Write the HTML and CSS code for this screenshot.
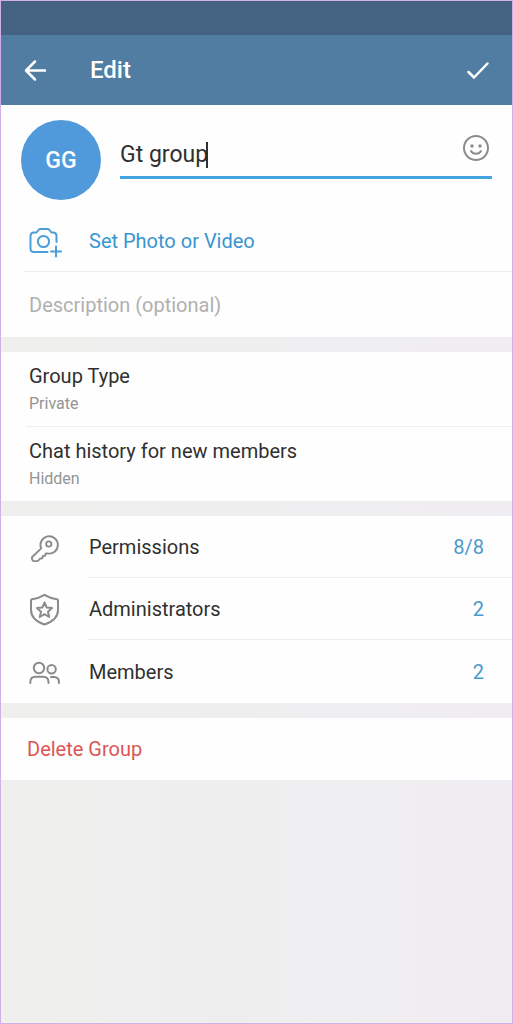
FILE: index.html
```html
<!DOCTYPE html>
<html lang="en">
<head>
<meta charset="utf-8">
<meta name="viewport" content="width=device-width, initial-scale=1">
<title>Edit group</title>
<link rel="stylesheet" href="styles.css">
</head>
<body>
<div class="screen">
  <div class="status-bar"></div>
  <header class="app-bar">
    <button class="icon-button" type="button" aria-label="Back">
      <svg class="bar-icon" width="24" height="24" viewBox="0 0 24 24"><path d="M22 12.500H3.500M12 3.500L3 12.500l9 9"/></svg>
    </button>
    <h1 class="title">Edit</h1>
    <button class="icon-button" type="button" aria-label="Done">
      <svg class="bar-icon" width="24" height="24" viewBox="0 0 24 24"><path d="M2.500 14l5.500 5.500L21.500 5.500"/></svg>
    </button>
  </header>

  <main>
    <section class="card">
      <div class="identity">
        <div class="avatar">GG</div>
        <div class="name-field">
          <input class="name-input" type="text" value="Gt group" size="8" aria-label="Group name"><span class="caret"></span>
          <button class="icon-button emoji-button" type="button" aria-label="Emoji">
            <svg class="line-icon" width="28" height="28" viewBox="0 0 28 28"><circle cx="14" cy="14" r="12"/><path d="M9 17c2.200 3.600 7.800 3.600 10 0"/><circle class="dot" cx="10" cy="12" r="1.700"/><circle class="dot" cx="18" cy="12" r="1.700"/></svg>
          </button>
        </div>
      </div>
      <button class="row photo-row" type="button">
        <svg class="line-icon accent" width="34" height="34" viewBox="0 0 34 34"><path d="M28.500 18V12Q28.500 8.500 25 8.500H23.500L21.500 6Q20.800 5 19.500 5H12.500Q11.200 5 10.500 6L8.500 8.500H6Q2.500 8.500 2.500 12V24.500Q2.500 28 6 28H19.500"/><circle cx="15.500" cy="17.500" r="5.600"/><path d="M28 22.500v10M23 27.500h10"/></svg>
        <span class="label accent">Set Photo or Video</span>
      </button>
      <div class="description">
        <input class="description-input" type="text" placeholder="Description (optional)" aria-label="Description">
      </div>
    </section>

    <section class="card">
      <button class="setting" type="button"><span class="label">Group Type</span><span class="value">Private</span></button>
      <button class="setting" type="button"><span class="label">Chat history for new members</span><span class="value">Hidden</span></button>
    </section>

    <section class="card">
      <button class="row" type="button">
        <svg class="line-icon" width="34" height="34" viewBox="-1 -2 36 36"><path d="M13 17.500A9.200 9.200 0 1 1 19.500 22.800L17.500 23L17.200 25.300L14.500 25.600L14.200 28L11.800 28.200L10 30.300Q7 31.500 4 30.300Q2.800 28.500 3.200 26.800Z"/><circle cx="21" cy="12.800" r="2.800"/></svg>
        <span class="label">Permissions</span><span class="count">8/8</span>
      </button>
      <button class="row" type="button">
        <svg class="line-icon" width="34" height="34" viewBox="0 -1 34 34"><path d="M16.500 1.800Q22.500 5.500 29 6.200Q30 6.400 30 7.500V17Q30 27 16.500 31.500Q3 27 3 17V7.500Q3 6.400 4 6.200Q10.500 5.500 16.500 1.800Z"/><path d="M16.500 9.500L18.700 14.600L24 15.100L20 18.700L21.200 24L16.500 21.200L11.800 24L13 18.700L9 15.100L14.300 14.600Z"/></svg>
        <span class="label">Administrators</span><span class="count">2</span>
      </button>
      <button class="row" type="button">
        <svg class="line-icon" width="34" height="34" viewBox="0 -1 34 34"><circle cx="11" cy="12" r="5.200"/><circle cx="23.600" cy="13.300" r="4.200"/><path d="M2.300 27v-.8Q2.300 20.800 7.700 20.800H15Q20.500 20.800 20.500 26.200v.8M23 21H26Q31 21 31 26.500v.5"/></svg>
        <span class="label">Members</span><span class="count">2</span>
      </button>
    </section>

    <section class="card">
      <button class="delete" type="button">Delete Group</button>
    </section>
  </main>
</div>
</body>
</html>
```
FILE: styles.css
```css
* {
  box-sizing: border-box;
}

body {
  margin: 0;
  font-family: Roboto, "Liberation Sans", sans-serif;
  color: #303030;
}

button,
input {
  margin: 0;
  padding: 0;
  border: 0;
  background: none;
  color: inherit;
  font: inherit;
  text-align: left;
}

button {
  cursor: pointer;
}

input {
  outline: 0;
}

svg {
  display: block;
  flex: none;
  fill: none;
  stroke-linecap: round;
  stroke-linejoin: round;
}

.screen {
  min-height: 100vh;
  border: 1px solid #d2afe6;
  background: linear-gradient(90deg, #efefed 0%, #efeeef 45%, #efedf1 100%);
}

.status-bar {
  height: 34px;
  background: #446281;
}

.app-bar {
  display: flex;
  align-items: center;
  height: 70px;
  padding: 0 22px;
  background: #517da2;
  color: #fff;
}

.title {
  flex: 1;
  margin: 0;
  padding-left: 43px;
  font-size: 24px;
  line-height: 32px;
  font-weight: 500;
}

.bar-icon {
  stroke: #fff;
  stroke-width: 2.5;
}

.card {
  margin-bottom: 15px;
  background: #fefefe;
}

.identity {
  display: flex;
  gap: 19px;
  padding: 15px 20px 10px;
}

.avatar {
  display: flex;
  flex: none;
  align-items: center;
  justify-content: center;
  width: 80px;
  height: 80px;
  border-radius: 50%;
  background: #5099db;
  color: #fff;
  font-size: 23px;
  font-weight: 500;
}

.name-field {
  display: flex;
  flex: 1;
  align-items: center;
  height: 59px;
  padding-top: 14px;
  border-bottom: 3px solid #43a4df;
}

.name-input {
  field-sizing: content;
  font-size: 23px;
  line-height: 32px;
}

.caret {
  width: 2px;
  height: 26px;
  margin-left: -2px;
  background: #303030;
}

.emoji-button {
  margin: 0 2px 14px auto;
}

.line-icon {
  stroke: #8b8b8b;
  stroke-width: 2;
}

.line-icon .dot {
  fill: #8b8b8b;
  stroke: none;
}

.row {
  display: flex;
  align-items: center;
  gap: 27px;
  width: 100%;
  height: 62px;
  padding: 0 28px 0 27px;
  background: linear-gradient(#ededed, #ededed) 86px 100% / 100% 1px no-repeat;
}

.row:last-child {
  height: 63px;
  background: none;
}

.photo-row {
  background-position-x: 22px;
}

.label {
  font-size: 20px;
  line-height: 28px;
}

.label.accent {
  color: #3995d0;
}

.line-icon.accent {
  stroke: #4a9fd8;
}

.count {
  margin-left: auto;
  color: #4a9ace;
  font-size: 20px;
  line-height: 28px;
}

.description {
  padding: 19px 28px 18px;
}

.description-input {
  display: block;
  width: 100%;
  font-size: 20px;
  line-height: 28px;
}

.description-input::placeholder {
  color: #b0b0b0;
  opacity: 1;
}

.setting {
  display: flex;
  flex-direction: column;
  gap: 4px;
  width: 100%;
  height: 75px;
  padding: 10px 28px;
  background: linear-gradient(#ededed, #ededed) 25px 100% / 100% 1px no-repeat;
}

.setting:last-child {
  height: 74px;
  background: none;
}

.value {
  color: #949494;
  font-size: 16px;
  line-height: 20px;
}

.delete {
  width: 100%;
  height: 62px;
  padding: 0 26px;
  color: #dc5555;
  font-size: 20px;
  line-height: 28px;
}
```
